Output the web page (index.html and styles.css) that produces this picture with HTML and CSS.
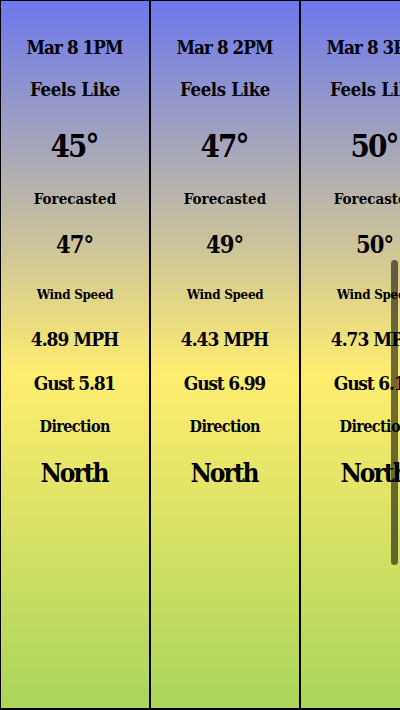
FILE: index.html
```html
<!DOCTYPE html>
<html>
<head>
<meta charset="utf-8">
<link rel="stylesheet" href="styles.css">
</head>
<body>
<div class="strip">
  <div class="hour">
    <div class="date">Mar 8 1PM</div>
    <div class="label-lg">Feels Like</div>
    <div class="temp-big">45°</div>
    <div class="label">Forecasted</div>
    <div class="temp">47°</div>
    <div class="label-sm">Wind Speed</div>
    <div class="speed">4.89 MPH</div>
    <div class="gust">Gust 5.81</div>
    <div class="label-dir">Direction</div>
    <div class="dir">North</div>
  </div>
  <div class="hour">
    <div class="date">Mar 8 2PM</div>
    <div class="label-lg">Feels Like</div>
    <div class="temp-big">47°</div>
    <div class="label">Forecasted</div>
    <div class="temp">49°</div>
    <div class="label-sm">Wind Speed</div>
    <div class="speed">4.43 MPH</div>
    <div class="gust">Gust 6.99</div>
    <div class="label-dir">Direction</div>
    <div class="dir">North</div>
  </div>
  <div class="hour">
    <div class="date">Mar 8 3PM</div>
    <div class="label-lg">Feels Like</div>
    <div class="temp-big">50°</div>
    <div class="label">Forecasted</div>
    <div class="temp">50°</div>
    <div class="label-sm">Wind Speed</div>
    <div class="speed">4.73 MPH</div>
    <div class="gust">Gust 6.13</div>
    <div class="label-dir">Direction</div>
    <div class="dir">North</div>
  </div>
</div>
<div class="thumb"></div>
</body>
</html>
```
FILE: styles.css
```css
html, body {
  margin: 0;
  padding: 0;
  width: 400px;
  height: 710px;
  overflow: hidden;
}
body {
  font-family: "DejaVu Serif", "Liberation Serif", serif;
  font-stretch: condensed;
  font-weight: bold;
  color: #000;
  position: relative;
}
.strip {
  display: flex;
  width: 400px;
  height: 710px;
  overflow: hidden;
}
.hour {
  flex: 0 0 150px;
  width: 150px;
  height: 710px;
  box-sizing: border-box;
  border: 1px solid #000;
  border-bottom-width: 2px;
  background: linear-gradient(#6d78ec 0%, #ffed6f 53%, #aad55b 100%);
  display: flex;
  flex-direction: column;
  align-items: center;
  padding-top: 38px;
  line-height: 1;
  white-space: nowrap;
}
.date { font-size: 18.6px; margin-top: 0.4px; letter-spacing: -0.9px; text-indent: -0.9px; }
.label-lg { font-size: 18.4px; margin-top: 23px; letter-spacing: -0.3px; }
.temp-big { font-size: 31px; margin-top: 32px; letter-spacing: -2px; text-indent: -2px; }
.label { font-size: 15px; margin-top: 30px; letter-spacing: 0; }
.temp { font-size: 23.5px; margin-top: 27px; letter-spacing: -1px; text-indent: -1px; }
.label-sm { font-size: 13.3px; margin-top: 30px; letter-spacing: -0.3px; }
.speed { font-size: 19px; margin-top: 28.5px; letter-spacing: -1px; text-indent: -1px; }
.gust { font-size: 19px; margin-top: 25px; letter-spacing: -1.2px; text-indent: -1.2px; }
.label-dir { font-size: 16px; margin-top: 26px; letter-spacing: -0.6px; text-indent: -0.6px; }
.dir { font-size: 26px; margin-top: 25.5px; letter-spacing: -2px; text-indent: -2px; }
.thumb {
  position: absolute;
  left: 391px;
  top: 260px;
  width: 7px;
  height: 305px;
  border-radius: 4px;
  background: rgba(0, 0, 0, 0.55);
}
```
